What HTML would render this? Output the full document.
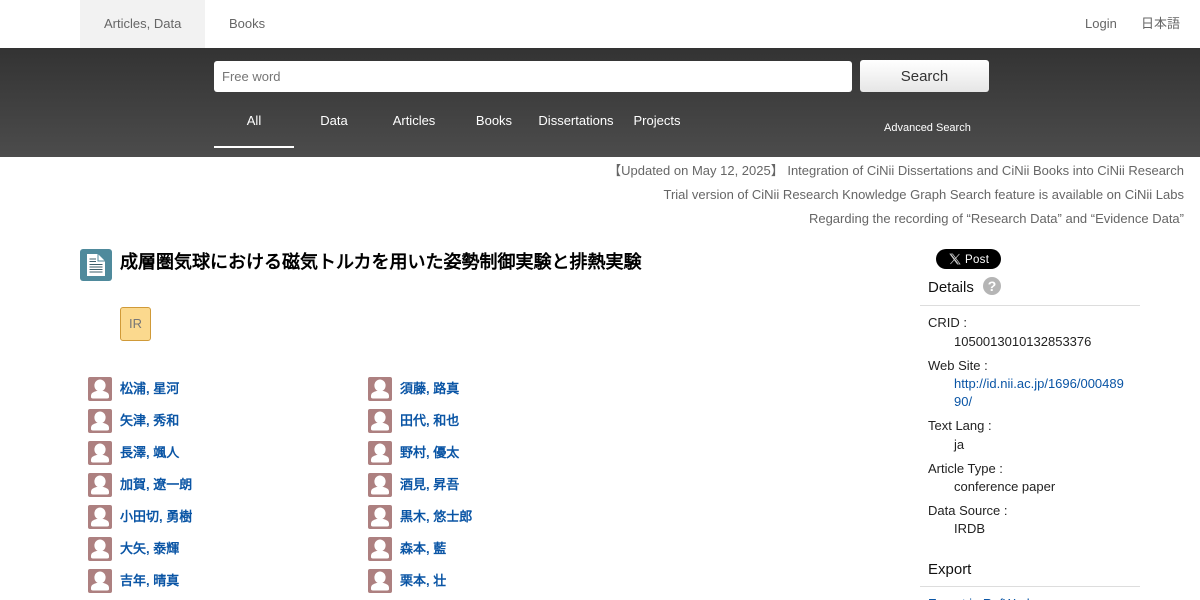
<!DOCTYPE html>
<html lang="ja">
<head>
<meta charset="utf-8">
<title>CiNii Research</title>
<style>
html,body{margin:0;padding:0;background:#fff;width:1200px;height:600px;overflow:hidden}
#w{position:relative;width:1200px;height:600px;overflow:hidden;font-family:"Liberation Sans","WenQuanYi Zen Hei",sans-serif;font-size:13px;color:#333}
.a{position:absolute;white-space:nowrap}
.t{height:20px;line-height:20px}
.nav{color:#666;top:14px}
.tab{color:#fff;top:111px;width:80px;text-align:center}
.news{right:16px;color:#666;height:24px;line-height:24px}
.av{position:absolute;width:24px;height:24px;background:#ad8080;border-radius:2px;overflow:hidden}
.av svg{display:block}
.n{position:absolute;height:24px;line-height:24px;font-weight:bold;color:#0a55a5;white-space:nowrap}
.s{left:928px;color:#222}
.v{left:954px;color:#222}
</style>
</head>
<body>
<div id="w">
<div class="a" style="left:80px;top:0;width:125px;height:48px;background:#f2f2f2"></div>
<div class="a t nav" style="left:104px">Articles, Data</div>
<div class="a t nav" style="left:229px">Books</div>
<div class="a t nav" style="left:1085px">Login</div>
<div class="a t nav" style="left:1141px">日本語</div>

<div class="a" style="left:0;top:48px;width:1200px;height:109px;background:linear-gradient(#333,#4c4c4c)"></div>
<div class="a" style="left:214px;top:61px;width:638px;height:31px;background:#fff;border-radius:3px;color:#757575;line-height:31px;text-indent:8px">Free word</div>
<div class="a" style="left:860px;top:60px;width:129px;height:32px;background:linear-gradient(#fff,#e6e6e6);border-radius:3px;color:#333;font-size:15px;line-height:33px;text-align:center">Search</div>
<div class="a t tab" style="left:214px">All</div>
<div class="a" style="left:214px;top:146px;width:80px;height:2px;background:#fff"></div>
<div class="a t tab" style="left:294px">Data</div>
<div class="a t tab" style="left:374px">Articles</div>
<div class="a t tab" style="left:454px">Books</div>
<div class="a t tab" style="left:536px">Dissertations</div>
<div class="a t tab" style="left:617px">Projects</div>
<div class="a t" style="left:884px;top:118px;color:#fff;font-size:11px">Advanced Search</div>

<div class="a news" style="top:159px">【Updated on May 12, 2025】 Integration of CiNii Dissertations and CiNii Books into CiNii Research</div>
<div class="a news" style="top:183px">Trial version of CiNii Research Knowledge Graph Search feature is available on CiNii Labs</div>
<div class="a news" style="top:207px">Regarding the recording of “Research Data” and “Evidence Data”</div>

<svg class="a" style="left:80px;top:249px" width="32" height="32" viewBox="0 0 32 32">
<rect width="32" height="32" rx="3" fill="#4f8a9c"/>
<path d="M7 5H18L25 12V27H7Z" fill="#fff"/>
<path d="M18 5V12H25" fill="none" stroke="#4f8a9c" stroke-width="1"/>
<path d="M9.5 10H16M9.5 12.5H16M9.5 15.5H22.5M9.5 18H22.5M9.5 20.5H22.5M9.5 23H22.5" stroke="#3d5f6b" stroke-width="1"/>
</svg>
<div class="a" style="left:120px;top:249px;height:26px;line-height:26px;font-size:18px;font-weight:bold;color:#000">成層圏気球における磁気トルカを用いた姿勢制御実験と排熱実験</div>
<div class="a" style="left:120px;top:307px;width:29px;height:32px;background:#fbd98e;border:1px solid #d09a38;border-radius:3px;color:#777;line-height:32px;text-align:center">IR</div>

<div class="av" style="left:88px;top:377px"><svg width="24" height="24"><ellipse cx="12" cy="8.5" rx="5.6" ry="6" fill="#fff"/><path d="M3 20V18.5Q3 15.5 8.5 14H15.5Q21 15.5 21 18.5V20Q21 21.5 19 21.5H5Q3 21.5 3 20Z" fill="#fff"/></svg></div><div class="n" style="left:120px;top:377px">松浦, 星河</div>
<div class="av" style="left:88px;top:409px"><svg width="24" height="24"><ellipse cx="12" cy="8.5" rx="5.6" ry="6" fill="#fff"/><path d="M3 20V18.5Q3 15.5 8.5 14H15.5Q21 15.5 21 18.5V20Q21 21.5 19 21.5H5Q3 21.5 3 20Z" fill="#fff"/></svg></div><div class="n" style="left:120px;top:409px">矢津, 秀和</div>
<div class="av" style="left:88px;top:441px"><svg width="24" height="24"><ellipse cx="12" cy="8.5" rx="5.6" ry="6" fill="#fff"/><path d="M3 20V18.5Q3 15.5 8.5 14H15.5Q21 15.5 21 18.5V20Q21 21.5 19 21.5H5Q3 21.5 3 20Z" fill="#fff"/></svg></div><div class="n" style="left:120px;top:441px">長澤, 颯人</div>
<div class="av" style="left:88px;top:473px"><svg width="24" height="24"><ellipse cx="12" cy="8.5" rx="5.6" ry="6" fill="#fff"/><path d="M3 20V18.5Q3 15.5 8.5 14H15.5Q21 15.5 21 18.5V20Q21 21.5 19 21.5H5Q3 21.5 3 20Z" fill="#fff"/></svg></div><div class="n" style="left:120px;top:473px">加賀, 遼一朗</div>
<div class="av" style="left:88px;top:505px"><svg width="24" height="24"><ellipse cx="12" cy="8.5" rx="5.6" ry="6" fill="#fff"/><path d="M3 20V18.5Q3 15.5 8.5 14H15.5Q21 15.5 21 18.5V20Q21 21.5 19 21.5H5Q3 21.5 3 20Z" fill="#fff"/></svg></div><div class="n" style="left:120px;top:505px">小田切, 勇樹</div>
<div class="av" style="left:88px;top:537px"><svg width="24" height="24"><ellipse cx="12" cy="8.5" rx="5.6" ry="6" fill="#fff"/><path d="M3 20V18.5Q3 15.5 8.5 14H15.5Q21 15.5 21 18.5V20Q21 21.5 19 21.5H5Q3 21.5 3 20Z" fill="#fff"/></svg></div><div class="n" style="left:120px;top:537px">大矢, 泰輝</div>
<div class="av" style="left:88px;top:569px"><svg width="24" height="24"><ellipse cx="12" cy="8.5" rx="5.6" ry="6" fill="#fff"/><path d="M3 20V18.5Q3 15.5 8.5 14H15.5Q21 15.5 21 18.5V20Q21 21.5 19 21.5H5Q3 21.5 3 20Z" fill="#fff"/></svg></div><div class="n" style="left:120px;top:569px">吉年, 晴真</div>

<div class="av" style="left:368px;top:377px"><svg width="24" height="24"><ellipse cx="12" cy="8.5" rx="5.6" ry="6" fill="#fff"/><path d="M3 20V18.5Q3 15.5 8.5 14H15.5Q21 15.5 21 18.5V20Q21 21.5 19 21.5H5Q3 21.5 3 20Z" fill="#fff"/></svg></div><div class="n" style="left:400px;top:377px">須藤, 路真</div>
<div class="av" style="left:368px;top:409px"><svg width="24" height="24"><ellipse cx="12" cy="8.5" rx="5.6" ry="6" fill="#fff"/><path d="M3 20V18.5Q3 15.5 8.5 14H15.5Q21 15.5 21 18.5V20Q21 21.5 19 21.5H5Q3 21.5 3 20Z" fill="#fff"/></svg></div><div class="n" style="left:400px;top:409px">田代, 和也</div>
<div class="av" style="left:368px;top:441px"><svg width="24" height="24"><ellipse cx="12" cy="8.5" rx="5.6" ry="6" fill="#fff"/><path d="M3 20V18.5Q3 15.5 8.5 14H15.5Q21 15.5 21 18.5V20Q21 21.5 19 21.5H5Q3 21.5 3 20Z" fill="#fff"/></svg></div><div class="n" style="left:400px;top:441px">野村, 優太</div>
<div class="av" style="left:368px;top:473px"><svg width="24" height="24"><ellipse cx="12" cy="8.5" rx="5.6" ry="6" fill="#fff"/><path d="M3 20V18.5Q3 15.5 8.5 14H15.5Q21 15.5 21 18.5V20Q21 21.5 19 21.5H5Q3 21.5 3 20Z" fill="#fff"/></svg></div><div class="n" style="left:400px;top:473px">酒見, 昇吾</div>
<div class="av" style="left:368px;top:505px"><svg width="24" height="24"><ellipse cx="12" cy="8.5" rx="5.6" ry="6" fill="#fff"/><path d="M3 20V18.5Q3 15.5 8.5 14H15.5Q21 15.5 21 18.5V20Q21 21.5 19 21.5H5Q3 21.5 3 20Z" fill="#fff"/></svg></div><div class="n" style="left:400px;top:505px">黒木, 悠士郎</div>
<div class="av" style="left:368px;top:537px"><svg width="24" height="24"><ellipse cx="12" cy="8.5" rx="5.6" ry="6" fill="#fff"/><path d="M3 20V18.5Q3 15.5 8.5 14H15.5Q21 15.5 21 18.5V20Q21 21.5 19 21.5H5Q3 21.5 3 20Z" fill="#fff"/></svg></div><div class="n" style="left:400px;top:537px">森本, 藍</div>
<div class="av" style="left:368px;top:569px"><svg width="24" height="24"><ellipse cx="12" cy="8.5" rx="5.6" ry="6" fill="#fff"/><path d="M3 20V18.5Q3 15.5 8.5 14H15.5Q21 15.5 21 18.5V20Q21 21.5 19 21.5H5Q3 21.5 3 20Z" fill="#fff"/></svg></div><div class="n" style="left:400px;top:569px">栗本, 壮</div>

<div class="a" style="left:936px;top:249px;width:65px;height:20px;background:#000;border-radius:10px"></div>
<svg class="a" style="left:949px;top:253px" width="12" height="12" viewBox="0 0 12 12"><path d="M1 1H3.6L11 11H8.4ZM10.4 1L1.4 11M2.3 1.7L8.8 10.3" fill="none" stroke="#ccc" stroke-width=".7"/></svg>
<div class="a" style="left:965px;top:250px;height:20px;line-height:20px;color:#fff;font-size:11.5px;letter-spacing:.3px">Post</div>

<div class="a" style="left:928px;top:276px;height:22px;line-height:24px;font-size:15px;color:#111">Details</div>
<div class="a" style="left:983px;top:277px;width:18px;height:18px;border-radius:50%;background:#b5b5b5;color:#fff;font-weight:bold;font-size:14px;line-height:18px;text-align:center">?</div>
<div class="a" style="left:920px;top:305px;width:220px;height:1px;background:#ddd"></div>

<div class="a t s" style="top:313px">CRID :</div>
<div class="a t v" style="top:332px">1050013010132853376</div>
<div class="a t s" style="top:356px">Web Site :</div>
<div class="a t v" style="top:374px;color:#0a55a5">http://id.nii.ac.jp/1696/000489</div>
<div class="a t v" style="top:392px;color:#0a55a5">90/</div>
<div class="a t s" style="top:416px">Text Lang :</div>
<div class="a t v" style="top:435px">ja</div>
<div class="a t s" style="top:459px">Article Type :</div>
<div class="a t v" style="top:477px">conference paper</div>
<div class="a t s" style="top:501px">Data Source :</div>
<div class="a t v" style="top:519px">IRDB</div>

<div class="a" style="left:928px;top:558px;height:22px;line-height:24px;font-size:15px;color:#111">Export</div>
<div class="a" style="left:920px;top:586px;width:220px;height:1px;background:#ddd"></div>
<div class="a t" style="left:928px;top:594px;color:#0a55a5">Export in RefWorks</div>
</div>
</body>
</html>
